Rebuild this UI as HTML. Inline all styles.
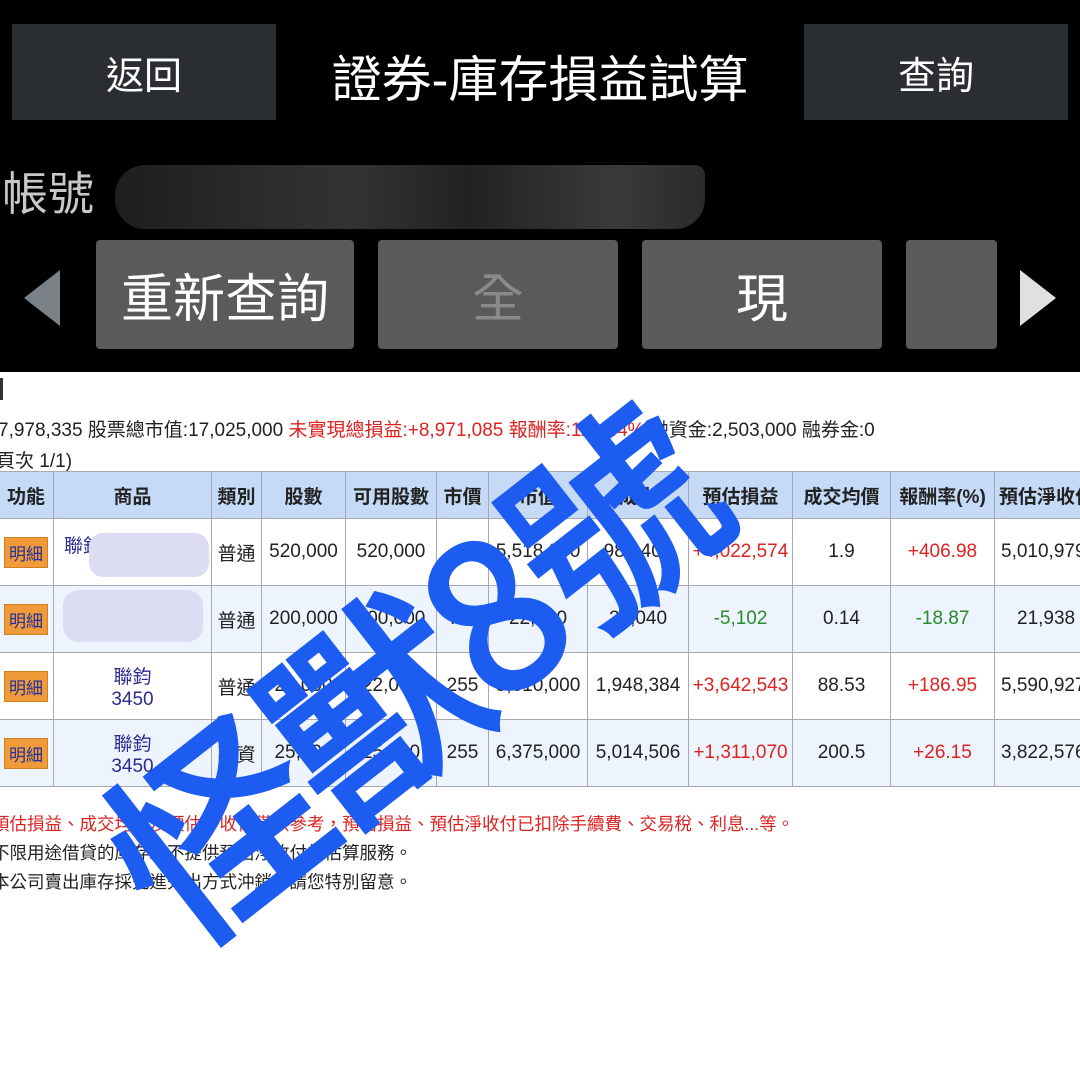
<!DOCTYPE html>
<html><head><meta charset="utf-8"><style>
*{margin:0;padding:0;box-sizing:border-box}
body{width:1080px;height:1066px;background:#fff;font-family:"Liberation Sans","Noto Sans CJK TC",sans-serif;position:relative;overflow:hidden}
.top{position:absolute;left:0;top:0;width:1080px;height:372px;background:#000}
.btn{position:absolute;background:#2b2e31;color:#fff;font-size:38px;display:flex;align-items:center;justify-content:center}
.title{position:absolute;left:276px;width:528px;top:40px;text-align:center;color:#fff;font-size:50px}
.acct{position:absolute;left:2px;top:158px;color:#c8c8c8;font-size:46px}
.blob{position:absolute;left:115px;top:165px;width:590px;height:64px;border-radius:30px 10px 30px 30px;background:linear-gradient(90deg,#1e1e1e,#333 40%,#222 60%,#3a3a3a 85%,#2a2a2a)}
.tab{position:absolute;top:240px;height:109px;background:#5a5a5a;border-radius:4px;color:#fff;font-size:52px;display:flex;align-items:center;justify-content:center}
.info{position:absolute;left:-2px;font-size:19px;color:#222;white-space:nowrap}
.red{color:#d22}
table{position:absolute;left:-2px;top:471px;border-collapse:collapse;font-size:19px;color:#222;table-layout:fixed;width:1110px}
td,th{border:1px solid #a8a8b4;text-align:center;padding:0;overflow:hidden;white-space:nowrap}
th{background:#c4daf7;height:47px;font-weight:bold}
td{height:67px}
tr.alt td{background:#eef4fd}
.mx{display:inline-block;background:#f09a3a;color:#2030a0;font-size:17px;padding:2px 4px;border:1px solid #d08020}
.pd{color:#2a2a90}
.g{color:#2a8a2a}
.note{position:absolute;left:-8px;font-size:17.5px;color:#222;white-space:nowrap}
.note.red{color:#d22}
.wm{position:absolute;left:128px;top:782px;font-size:205px;font-weight:normal;color:#1c5cf0;transform:rotate(-38deg);transform-origin:0 50%;white-space:nowrap;line-height:1;font-family:"Noto Sans CJK TC",sans-serif;letter-spacing:-6px;-webkit-text-stroke:5px #1c5cf0}
</style></head><body>
<div class="top">
<div class="btn" style="left:12px;top:24px;width:264px;height:96px">返回</div>
<div class="title">證券-庫存損益試算</div>
<div class="btn" style="left:804px;top:24px;width:264px;height:96px">查詢</div>
<div class="acct">帳號</div>
<div class="blob"></div>
<svg style="position:absolute;left:24px;top:270px" width="38" height="58"><polygon points="36,0 36,56 0,28" fill="#7a8288"/></svg>
<div class="tab" style="left:96px;width:258px">重新查詢</div>
<div class="tab" style="left:378px;width:240px;color:#8a8a8a">全</div>
<div class="tab" style="left:642px;width:240px">現</div>
<div class="tab" style="left:906px;width:91px"></div>
<svg style="position:absolute;left:1020px;top:270px" width="38" height="58"><polygon points="0,0 0,56 36,28" fill="#e0e0e0"/></svg>
</div>
<div class="info" style="top:378px;left:0;width:3px;height:22px;background:#333"></div>
<div class="info" style="top:415px">7,978,335 股票總市值:17,025,000 <span class="red">未實現總損益:+8,971,085 報酬率:112.44%</span> 融資金:2,503,000 融券金:0</div>
<div class="info" style="top:446px;left:-4px">頁次 1/1)</div>
<table>
<colgroup><col style="width:55px"><col style="width:158px"><col style="width:50px"><col style="width:84px"><col style="width:91px"><col style="width:52px"><col style="width:99px"><col style="width:101px"><col style="width:104px"><col style="width:98px"><col style="width:104px"><col style="width:114px"></colgroup>
<tr><th>功能</th><th>商品</th><th>類別</th><th>股數</th><th>可用股數</th><th>市價</th><th>市值</th><th>成本</th><th>預估損益</th><th>成交均價</th><th>報酬率(%)</th><th style="text-align:left;padding-left:4px">預估淨收付</th></tr>
<tr><td><span class="mx">明細</span></td><td class="pd" style="position:relative;text-align:left;vertical-align:top;padding:12px 0 0 10px">聯鈞<span style="position:absolute;left:35px;top:14px;width:120px;height:44px;background:#dcdcf2;border-radius:14px"></span></td><td>普通</td><td>520,000</td><td>520,000</td><td></td><td>5,518,000</td><td>988,405</td><td class="red">+4,022,574</td><td>1.9</td><td class="red">+406.98</td><td style="text-align:left;padding-left:6px">5,010,979</td></tr>
<tr class="alt"><td><span class="mx">明細</span></td><td class="pd"><span style="display:inline-block;width:140px;height:52px;background:#dcdcf2;border-radius:16px"></span></td><td>普通</td><td>200,000</td><td>200,000</td><td>.11</td><td>22,000</td><td>27,040</td><td class="g">-5,102</td><td>0.14</td><td class="g">-18.87</td><td style="text-align:left;padding-left:22px">21,938</td></tr>
<tr><td><span class="mx">明細</span></td><td class="pd">聯鈞<br>3450</td><td>普通</td><td>22,000</td><td>22,000</td><td>255</td><td>5,610,000</td><td>1,948,384</td><td class="red">+3,642,543</td><td>88.53</td><td class="red">+186.95</td><td style="text-align:left;padding-left:6px">5,590,927</td></tr>
<tr class="alt"><td><span class="mx">明細</span></td><td class="pd">聯鈞<br>3450</td><td>融資</td><td>25,000</td><td>25,000</td><td>255</td><td>6,375,000</td><td>5,014,506</td><td class="red">+1,311,070</td><td>200.5</td><td class="red">+26.15</td><td style="text-align:left;padding-left:6px">3,822,576</td></tr>
</table>
<div class="note red" style="top:811px">預估損益、成交均價及預估淨收付僅供參考，預估損益、預估淨收付已扣除手續費、交易稅、利息...等。</div>
<div class="note" style="top:840px">不限用途借貸的庫存恕不提供預估淨收付的估算服務。</div>
<div class="note" style="top:869px">本公司賣出庫存採先進先出方式沖銷，請您特別留意。</div>
<div class="wm">怪獸8號</div>
</body></html>
